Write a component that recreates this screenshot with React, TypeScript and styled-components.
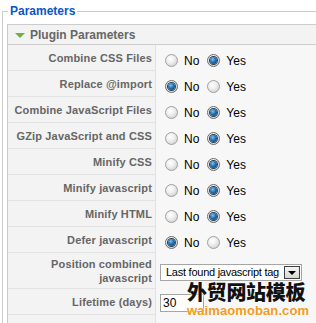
import React from "react";
import styled, { createGlobalStyle } from "styled-components";

const Global = createGlobalStyle`
  html, body { margin: 0; padding: 0; background: #fff; overflow: hidden; }
  body { font-family: "Liberation Sans", Arial, sans-serif; }
  #root { position: relative; width: 420px; height: 323px; overflow: hidden; }
`;

const Fieldset = styled.fieldset`
  margin: 3px 0 0 2px;
  padding: 0 0 0 4px;
  border: 1px solid #cccccc;
  width: 400px;
  min-width: 0;
`;

const Legend = styled.legend`
  margin-left: 1px;
  padding: 0 2px;
  font-size: 12px;
  line-height: 16px;
  font-weight: bold;
  color: #0b55c4;
`;

const Panel = styled.div`
  margin-top: 5px;
  border: 1px solid #cccccc;
  background: #f7f7f7;
`;

const PanelHeader = styled.div`
  display: flex;
  align-items: center;
  height: 19px;
  padding-left: 7px;
  background: #f3f3f3;
  border-bottom: 1px solid #cccccc;
`;

const Arrow = styled.span`
  width: 0;
  height: 0;
  border-left: 5px solid transparent;
  border-right: 5px solid transparent;
  border-top: 5px solid #6cb33e;
  margin-right: 5px;
  margin-top: 1px;
`;

const PanelTitle = styled.span`
  font-size: 12px;
  font-weight: bold;
  color: #666666;
`;

const Row = styled.div<{ $h?: number }>`
  display: flex;
  height: ${(p) => p.$h ?? 26}px;
`;

const Key = styled.div`
  box-sizing: border-box;
  width: 148px;
  flex: none;
  display: flex;
  align-items: center;
  justify-content: flex-end;
  text-align: right;
  padding: 0 3px 0 0;
  background: #f3f3f3;
  border-right: 1px solid #e2e2e2;
  border-bottom: 1px solid #e2e2e2;
  font-size: 11px;
  line-height: 14px;
  font-weight: bold;
  color: #666666;
  letter-spacing: 0.15px;
`;

const Value = styled.div<{ $top?: number }>`
  display: flex;
  align-items: center;
  padding: ${(p) => p.$top ?? 5}px 0 0 9px;
  box-sizing: border-box;
  height: 100%;
`;

const RadioDot = styled.span<{ $on: boolean }>`
  box-sizing: border-box;
  width: 13px;
  height: 13px;
  border-radius: 50%;
  border: 1px solid ${(p) => (p.$on ? "#6b6b6b" : "#a0a0a0")};
  background: radial-gradient(circle at 40% 35%, #ffffff 0%, #efefef 40%, #c4c4c4 100%);
  display: flex;
  align-items: center;
  justify-content: center;
  flex: none;
  &::after {
    content: "";
    display: ${(p) => (p.$on ? "block" : "none")};
    width: 7px;
    height: 7px;
    border-radius: 50%;
    background: radial-gradient(circle at 40% 35%, #7cc4f2 0%, #1e6fb4 45%, #0b3566 100%);
    box-shadow: 0 0 0 1px #2d3e52;
  }
`;

const RadioText = styled.span`
  font-size: 12px;
  line-height: 14px;
  color: #000;
  margin: 0 8px 0 6px;
`;

const SelectBox = styled.div`
  box-sizing: border-box;
  width: 142px;
  height: 17px;
  border: 1px solid #a5a5a5;
  background: #fff;
  display: flex;
  align-items: center;
  padding: 0 1px 0 5px;
  margin-left: -5px;
`;

const SelectText = styled.span`
  flex: 1;
  font-size: 11px;
  letter-spacing: -0.25px;
  color: #000;
  white-space: nowrap;
  overflow: hidden;
`;

const SelectButton = styled.span`
  box-sizing: border-box;
  width: 16px;
  height: 13px;
  border: 1px solid #404040;
  background: linear-gradient(#f4f4f4, #d6d6d6);
  display: flex;
  align-items: center;
  justify-content: center;
  &::after {
    content: "";
    width: 0;
    height: 0;
    border-left: 4px solid transparent;
    border-right: 4px solid transparent;
    border-top: 4px solid #000;
    margin-top: 1px;
  }
`;

const TextInput = styled.div`
  box-sizing: border-box;
  width: 44px;
  height: 18px;
  border: 1px solid #a5a5a5;
  background: #fff;
  font-size: 12px;
  line-height: 16px;
  padding-left: 2px;
  margin-left: -5px;
  color: #000;
`;

const Watermark = styled.div`
  position: absolute;
  left: 187px;
  top: 280px;
  display: flex;
  flex-direction: column;
  align-items: flex-start;
`;

const WmCn = styled.span`
  font-family: "Noto Sans CJK SC", sans-serif;
  font-weight: 900;
  font-size: 20px;
  line-height: 24px;
  color: #111;
  letter-spacing: -0.3px;
  text-shadow: 0 0 2px #fff, 0 0 2px #fff;
`;

const WmEn = styled.span`
  font-family: "Liberation Sans", Arial, sans-serif;
  font-weight: bold;
  font-size: 13px;
  line-height: 14px;
  color: #f39a1e;
  letter-spacing: 0.1px;
  text-shadow: 0 0 2px #fff;
`;

type Opt = { label: string; yes: boolean };
const radios: Opt[] = [
  { label: "Combine CSS Files", yes: true },
  { label: "Replace @import", yes: false },
  { label: "Combine JavaScript Files", yes: true },
  { label: "GZip JavaScript and CSS", yes: true },
  { label: "Minify CSS", yes: true },
  { label: "Minify javascript", yes: true },
  { label: "Minify HTML", yes: true },
  { label: "Defer javascript", yes: false },
];

const RadioPair = ({ yes }: { yes: boolean }) => (
  <>
    <RadioDot $on={!yes} />
    <RadioText>No</RadioText>
    <RadioDot $on={yes} />
    <RadioText>Yes</RadioText>
  </>
);

export default function App() {
  return (
    <>
      <Global />
      <Fieldset>
        <Legend>Parameters</Legend>
        <Panel>
          <PanelHeader>
            <Arrow />
            <PanelTitle>Plugin Parameters</PanelTitle>
          </PanelHeader>
          {radios.map((r) => (
            <Row key={r.label}>
              <Key>{r.label}</Key>
              <Value>
                <RadioPair yes={r.yes} />
              </Value>
            </Row>
          ))}
          <Row $h={36}>
            <Key>
              Position combined
              <br />
              javascript
            </Key>
            <Value $top={2}>
              <SelectBox>
                <SelectText>Last found javascript tag</SelectText>
                <SelectButton />
              </SelectBox>
            </Value>
          </Row>
          <Row>
            <Key>Lifetime (days)</Key>
            <Value $top={1}>
              <TextInput>30</TextInput>
            </Value>
          </Row>
          <Row>
            <Key />
            <Value />
          </Row>
        </Panel>
      </Fieldset>
      <Watermark>
        <WmCn>外贸网站模板</WmCn>
        <WmEn>waimaomoban.com</WmEn>
      </Watermark>
    </>
  );
}
